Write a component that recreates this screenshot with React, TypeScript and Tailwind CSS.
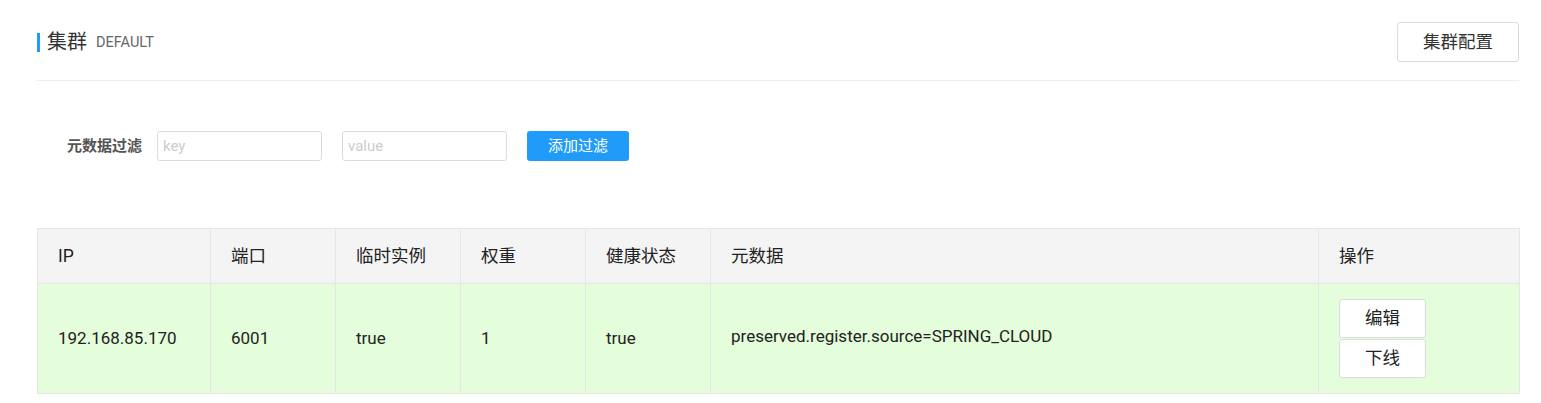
import React from 'react';

const cols = [
  { title: 'IP', w: 'w-[173px]' },
  { title: '端口', w: 'w-[125px]' },
  { title: '临时实例', w: 'w-[125px]' },
  { title: '权重', w: 'w-[125px]' },
  { title: '健康状态', w: 'w-[125px]' },
  { title: '元数据', w: 'w-[608px]' },
  { title: '操作', w: 'w-[201px]' },
];

export default function App() {
  return (
    <div className="min-h-screen bg-white pl-[37px] pr-[22px] pt-[22px] text-[#333] font-['Roboto','Noto_Sans_CJK_SC',sans-serif]">
      {/* Header */}
      <div className="flex items-center justify-between h-[40px]">
        <div className="flex items-center">
          <span className="w-[3px] h-[19px] bg-[#209bfa]" />
          <span className="ml-[7px] text-[20px] text-[#333]">集群</span>
          <span className="ml-[9px] text-[14.5px] text-[#666] mt-[2px]">DEFAULT</span>
        </div>
        <button className="w-[122px] h-[40px] border border-[#dcdcdc] rounded-[3px] bg-white text-[17.5px] text-[#333]">
          集群配置
        </button>
      </div>
      <div className="mt-[18px] border-t border-[#eee]" />

      {/* Filter */}
      <div className="flex items-center mt-[50px] pl-[30px] h-[30px]">
        <span className="text-[15px] font-bold text-[#555] mr-[15px]">元数据过滤</span>
        <input
          placeholder="key"
          className="w-[165px] h-[30px] border border-[#dcdcdc] rounded-[3px] px-[5px] text-[15px] placeholder:text-[#ccc] outline-none"
        />
        <input
          placeholder="value"
          className="ml-[20px] w-[165px] h-[30px] border border-[#dcdcdc] rounded-[3px] px-[5px] text-[15px] placeholder:text-[#ccc] outline-none"
        />
        <button className="ml-[20px] w-[102px] h-[30px] rounded-[3px] bg-[#209bfa] text-white text-[15px]">
          添加过滤
        </button>
      </div>

      {/* Table */}
      <table className="mt-[67px] w-[1482px] border-collapse table-fixed text-[17px] text-[#222]">
        <thead>
          <tr className="h-[55px] bg-[#f4f4f4]">
            {cols.map((c) => (
              <th key={c.title} className={`${c.w} border border-[#e6e6e6] px-[20px] text-left font-normal text-[17.5px]`}>
                {c.title}
              </th>
            ))}
          </tr>
        </thead>
        <tbody>
          <tr className="h-[110px] bg-[#e4fdda]">
            <td className="border border-[#e6e6e6] px-[20px]">192.168.85.170</td>
            <td className="border border-[#e6e6e6] px-[20px]">6001</td>
            <td className="border border-[#e6e6e6] px-[20px]">true</td>
            <td className="border border-[#e6e6e6] px-[20px]">1</td>
            <td className="border border-[#e6e6e6] px-[20px]">true</td>
            <td className="border border-[#e6e6e6] px-[20px]">
              <div className="-mt-[4px]">preserved.register.source=SPRING_CLOUD</div>
            </td>
            <td className="border border-[#e6e6e6] px-[20px]">
              <div className="flex flex-col gap-[1px]">
                <button className="w-[87px] h-[39px] border border-[#dcdcdc] rounded-[3px] bg-white text-[17.5px]">编辑</button>
                <button className="w-[87px] h-[39px] border border-[#dcdcdc] rounded-[3px] bg-white text-[17.5px]">下线</button>
              </div>
            </td>
          </tr>
        </tbody>
      </table>
    </div>
  );
}
